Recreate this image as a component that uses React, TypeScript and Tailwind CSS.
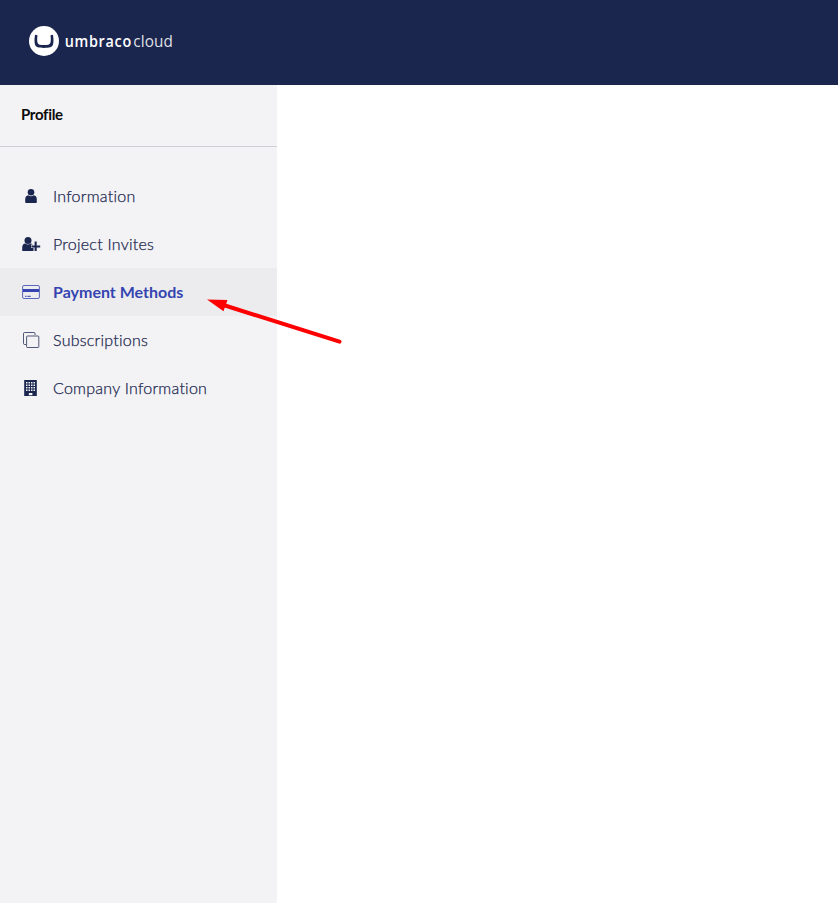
import type { ReactNode } from "react";

type Item = { label: string; icon: ReactNode; active?: boolean };

const UserIcon = () => (
  <svg className="size-5" viewBox="0 0 20 20" fill="currentColor">
    <circle cx="10" cy="6.3" r="3.3" />
    <path d="M4.2 16.2v-2.8c0-2.5 1-3.9 3-4.1 1.7 1.3 3.9 1.3 5.6 0 2 .2 3 1.6 3 4.1v2.8c0 .6-.3.8-.8.8H5c-.5 0-.8-.2-.8-.8Z" />
  </svg>
);

const InviteIcon = () => (
  <svg className="size-5" viewBox="0 0 20 20" fill="currentColor">
    <circle cx="7" cy="6.4" r="3.5" />
    <path d="M1.2 16.4v-2.8c0-2.5 1-3.9 3-4.1 1.7 1.3 3.7 1.3 5.4 0 1 .1 1.7.4 2.2 1H10v3.6h2.5V17H1.8c-.4 0-.6-.2-.6-.6Z" />
    <path d="M13.6 7.4h2.1v4h3.5v2h-3.5V17h-2.1v-3.6h-3.2v-2h3.2Z" />
  </svg>
);

const CardIcon = () => (
  <svg className="size-5" viewBox="0 0 20 20" fill="none" stroke="currentColor">
    <rect x="1.6" y="3.5" width="16.8" height="13" rx="1.3" strokeOpacity=".8" />
    <path d="M2 8.5h16" strokeWidth="3" />
    <path d="M4 14.3h1.5M6.3 14.3h3.4" />
  </svg>
);

const CopyIcon = () => (
  <svg className="size-5" viewBox="0 0 20 20" fill="none" stroke="currentColor" strokeOpacity=".75">
    <path d="M5 14.5H3.6a1.1 1.1 0 0 1-1.1-1.1V3.6a1.1 1.1 0 0 1 1.1-1.1h9.3A1.1 1.1 0 0 1 14 3.6v1.4" />
    <rect x="5.6" y="6" width="12.2" height="11.5" rx=".8" />
  </svg>
);

const BuildingIcon = () => (
  <svg className="size-5" viewBox="0 0 20 20" fill="currentColor">
    <path
      fillRule="evenodd"
      d="M3.2 2h12.6v16H3.2ZM5 4v1.5h1.5V4Zm2.5 0v1.5H9V4Zm2.5 0v1.5h1.5V4Zm2.5 0v1.5H14V4ZM5 6.5V8h1.5V6.5Zm2.5 0V8H9V6.5Zm2.5 0V8h1.5V6.5Zm2.5 0V8H14V6.5ZM5 9v1.5h1.5V9Zm2.5 0v1.5H9V9Zm2.5 0v1.5h1.5V9Zm2.5 0v1.5H14V9ZM5 11.5V13h1.5v-1.5Zm2.5 0V13H9v-1.5Zm2.5 0V13h1.5v-1.5Zm2.5 0V13H14v-1.5ZM7.8 15v2.2h3.6V15Z"
    />
  </svg>
);

const items: Item[] = [
  { label: "Information", icon: <UserIcon /> },
  { label: "Project Invites", icon: <InviteIcon /> },
  { label: "Payment Methods", icon: <CardIcon />, active: true },
  { label: "Subscriptions", icon: <CopyIcon /> },
  { label: "Company Information", icon: <BuildingIcon /> },
];

const Logo = () => (
  <svg width="150" height="34" viewBox="0 0 150 34" className="block">
    <circle cx="17" cy="17" r="15" fill="#fff" />
    <path
      d="M8.1 10.8c-.8 3.4-.8 7.4-.1 9.8.8 2.7 3.5 3.4 9 3.4s8.2-.7 9-3.4c.7-2.4.7-6.4-.1-9.8l-2.4.4c.5 3.4.4 6.3-.2 7.8-.6 1.6-2.3 2.1-6.3 2.1s-5.7-.5-6.3-2.1c-.6-1.5-.7-4.4-.2-7.8Z"
      fill="#1b264f"
    />
    <g transform="translate(37.7 22.5) scale(.93 1)" fill="#fff">
      <text className="font-['Open_Sans',sans-serif] text-[15.5px] font-semibold" textLength="71.5" lengthAdjust="spacing">
        umbraco
      </text>
    </g>
    <g transform="translate(106.3 22.5) scale(.9 1)" fill="#fff">
      <text className="font-['Open_Sans',sans-serif] text-[17px]" fillOpacity=".88" textLength="44" lengthAdjust="spacing">
        cloud
      </text>
    </g>
  </svg>
);

export default function App() {
  return (
    <div className="relative flex h-[903px] w-[838px] flex-col overflow-hidden bg-white font-['Lato',sans-serif]">
      <header className="h-[85px] shrink-0 bg-[#1b264f] pt-6 pl-[27px]">
        <Logo />
      </header>
      <div className="flex flex-1">
        <aside className="w-[277px] bg-[#f3f3f5]">
          <h2 className="h-[62px] border-b border-[#d0d0d4] pt-[19px] pl-[21px] text-[15px] leading-5 font-bold tracking-[-0.3px] text-[#0b0b0d]">
            Profile
          </h2>
          <nav className="pt-[25px]">
            {items.map((item) => (
              <a
                key={item.label}
                className={
                  item.active
                    ? "flex h-12 items-center gap-3 bg-[#ececee] pl-[21px] text-[#3544b1]"
                    : "flex h-12 items-center gap-3 pl-[21px] text-[#1b264f]"
                }
              >
                {item.icon}
                <span
                  className={
                    item.active
                      ? "text-[16px] font-bold"
                      : "text-[16px] font-light tracking-[0.25px] [-webkit-text-stroke:0.25px_#1b264f]"
                  }
                >
                  {item.label}
                </span>
              </a>
            ))}
          </nav>
        </aside>
        <main className="flex-1 bg-white" />
      </div>
      <svg className="absolute top-[285px] left-[195px]" width="160" height="70" viewBox="0 0 160 70">
        <path d="M30 20.5 144.5 56.7" stroke="#f00" strokeWidth="4" strokeLinecap="round" />
        <path d="m12 14.5 20.5.5-4 11.2Z" fill="#f00" />
      </svg>
    </div>
  );
}
